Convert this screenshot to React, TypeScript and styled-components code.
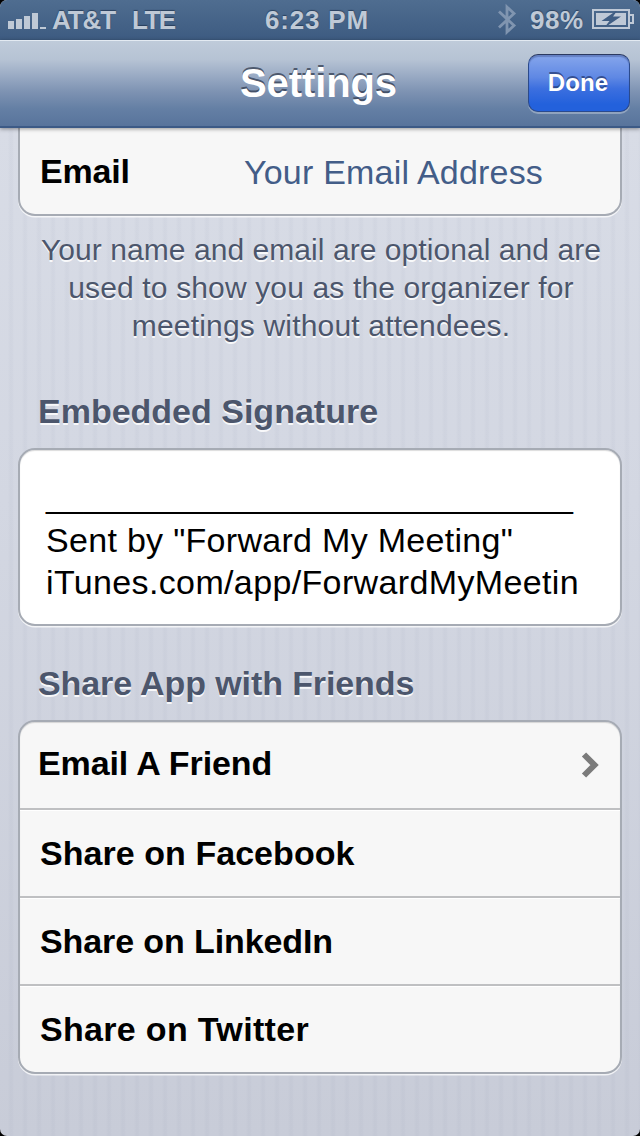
import React from "react";
import styled, { createGlobalStyle } from "styled-components";

const Global = createGlobalStyle`
  *{box-sizing:border-box}
  html,body{margin:0;background:#000}
  body{font-family:"Liberation Sans",Arial,sans-serif;color:#000}
`;

const Screen = styled.div`
  width:640px;height:1136px;overflow:hidden;border-radius:7px;
  display:flex;flex-direction:column;
  background:
    repeating-linear-gradient(90deg,transparent 0 8px,rgba(110,120,150,.045) 10px 12px,transparent 14px),
    linear-gradient(180deg,#d8dce6 128px,#d3d7e2 500px,#c8ccd8 1136px);
`;

const StatusBar = styled.header`
  height:40px;flex:none;display:flex;align-items:flex-start;
  background:linear-gradient(#4f6d90,#3d5b81);
  color:#bfc9d6;font-weight:700;font-size:26px;line-height:40px;
  text-shadow:0 -1px 1px rgba(30,48,76,.7);
  svg{display:block;flex:none}
`;
const StatusText = styled.span<{ $x: number; $w: number; $ls?: number }>`
  margin-left:${p => p.$x}px;width:${p => p.$w}px;white-space:nowrap;
  letter-spacing:${p => p.$ls ?? 0}px;
`;

const NavBar = styled.nav`
  position:relative;z-index:1;height:88px;flex:none;
  display:grid;grid-template-columns:112px 1fr 112px;
  border-top:1px solid #e3eaf2;border-bottom:2px solid #3c5a86;
  background:linear-gradient(#bfcbda 0,#b6c3d4 22%,#98a9c3 42%,#7d92b2 60%,#647fa4 80%,#58749c 100%);
  box-shadow:0 1px 4px rgba(0,0,0,.4);
`;
const Title = styled.h1`
  grid-column:2;margin:0;padding-right:3px;text-align:center;color:#fff;font-size:40px;line-height:84px;
  letter-spacing:-.1px;text-shadow:0 -2px 0 rgba(50,60,80,.75);
`;
const DoneButton = styled.button`
  width:102px;height:58px;margin:13px 0 0 0;padding:0 2px 0 0;border:1.5px solid #2b4a8c;border-top-color:#2c3a60;
  border-radius:10px;color:#fff;font:700 24px/54px "Liberation Sans",Arial,sans-serif;
  letter-spacing:.1px;background:linear-gradient(#86a6ec,#5f88e4 40%,#3c6fdf 60%,#2361dc 88%);
  box-shadow:inset 0 2px 1px rgba(40,60,120,.35),0 2px 0 rgba(255,255,255,.3);
  text-shadow:0 -2px 0 rgba(35,55,110,.7);
`;

const Content = styled.main`
  padding:0 18px;display:flex;flex-direction:column;
`;
const Card = styled.section<{ $joined?: boolean; $white?: boolean }>`
  border:2px solid #a6abb4;overflow:hidden;
  border-radius:${p => (p.$joined ? "0 0 17px 17px" : "17px")};
  ${p => p.$joined && "border-top:0;"}
  background:${p => (p.$white ? "#fff" : "#f7f7f7")};
  box-shadow:0 1.5px 0 rgba(255,255,255,.75)${p => (p.$joined ? "" : ",inset 0 1px 1px rgba(0,0,0,.14)")};
`;
const Field = styled.label`
  height:86px;display:flex;padding-left:20px;font-size:34px;line-height:86px;white-space:nowrap;
`;
const FieldName = styled.strong`width:204px;line-height:86px;letter-spacing:-.2px;`;
const FieldValue = styled.span`color:#435d88;line-height:89px;letter-spacing:.2px;`;

const Note = styled.p`
  margin:15px -10px 0 -8px;text-align:center;color:#4c566c;font-size:30px;line-height:38px;
  letter-spacing:.08px;text-shadow:0 2px 0 rgba(255,255,255,.85);
`;
const NoteLine = styled.span<{ $ls: number }>`
  display:block;letter-spacing:${p => p.$ls}px;
`;
const GroupTitle = styled.h2<{ $top: number; $bottom: number; $ls?: number }>`
  margin:${p => p.$top}px 0 ${p => p.$bottom}px 20px;color:#4c566c;font-size:34px;line-height:40px;
  letter-spacing:${p => p.$ls ?? 0}px;text-shadow:0 2px 0 rgba(255,255,255,.85);white-space:nowrap;
`;
const Signature = styled.div`
  height:174px;padding:30px 0 0 26px;font-size:34px;line-height:42px;white-space:nowrap;
`;
const Underscores = styled.div`height:39px;line-height:30px;letter-spacing:-.09px;`;
const SigLine = styled.div<{ $ls: number }>`letter-spacing:${p => p.$ls}px;`;

const Row = styled.div<{ $first?: boolean; $ls: number }>`
  height:88px;display:flex;justify-content:space-between;font-weight:700;font-size:34px;
  letter-spacing:${p => p.$ls}px;
  padding:0 20px 0 ${p => (p.$first ? 18 : 20)}px;line-height:${p => (p.$first ? 82 : 86)}px;
  ${p => (p.$first ? "height:86px;" : "border-top:2px solid #bfc0c2;box-shadow:inset 0 1px 0 #fff;")}
  svg{margin-top:29px}
`;

const Signal = () => (
  <svg width="40" height="40" fill="#bfc9d6">
    <path d="M1 21h6v8H1zM9 19h6v10H9zM17 16h6v13h-6zM25 13h6v16h-6zM33 27h6v2h-6z" />
  </svg>
);
const Bluetooth = () => (
  <svg width="22" height="40" fill="none" stroke="#8095b0" strokeWidth="2.800">
    <path d="M2 11.500l15 14-7 6.500V7l7 6.500-15 14" />
  </svg>
);
const Battery = () => (
  <svg width="44" height="40">
    <path d="M2 10h36v18H2zM39 15h3v8h-3" fill="none" stroke="#bfc9d6" strokeWidth="2" />
    <path d="M5 13h30v12H5z" fill="#bfc9d6" />
    <path d="M27 9.500L10.500 21h8L13 28l17-11.500h-8z" fill="#405e84" />
    <path d="M2 10h36v18H2z" fill="none" stroke="#bfc9d6" strokeWidth="2" />
  </svg>
);

export default function App() {
  return (
    <>
      <Global />
      <Screen>
        <StatusBar>
          <StatusText $x={7} $w={40}><Signal /></StatusText>
          <StatusText $x={5} $w={80} $ls={-1.1}>AT&amp;T</StatusText>
          <StatusText $x={0} $w={133} $ls={-1.5}>LTE</StatusText>
          <StatusText $x={0} $w={232} $ls={0.8}>6:23 PM</StatusText>
          <Bluetooth />
          <StatusText $x={11} $w={56} $ls={0.5}>98%</StatusText>
          <StatusText $x={5} $w={44}><Battery /></StatusText>
        </StatusBar>
        <NavBar>
          <Title>Settings</Title>
          <DoneButton>Done</DoneButton>
        </NavBar>
        <Content>
          <Card $joined>
            <Field>
              <FieldName>Email</FieldName>
              <FieldValue>Your Email Address</FieldValue>
            </Field>
          </Card>
          <Note>
            <NoteLine $ls={0.06}>Your name and email are optional and are</NoteLine>
            <NoteLine $ls={0.14}>used to show you as the organizer for</NoteLine>
            <NoteLine $ls={0.18}>meetings without attendees.</NoteLine>
          </Note>
          <GroupTitle $top={46} $bottom={17}>Embedded Signature</GroupTitle>
          <Card $white>
            <Signature>
              <Underscores>____________________________</Underscores>
              <SigLine $ls={0.3}>Sent by "Forward My Meeting"</SigLine>
              <SigLine $ls={0.36}>iTunes.com/app/ForwardMyMeetin</SigLine>
            </Signature>
          </Card>
          <GroupTitle $top={37} $bottom={17} $ls={-0.1}>Share App with Friends</GroupTitle>
          <Card>
            <Row $first $ls={-0.1}>
              Email A Friend
              <svg width="19" height="28" fill="none" stroke="#7b7b7b" strokeWidth="6">
                <path d="M3 3.500L13.500 14 3 24.500" />
              </svg>
            </Row>
            <Row $ls={0.05}>Share on Facebook</Row>
            <Row $ls={-0.1}>Share on LinkedIn</Row>
            <Row $ls={0.32}>Share on Twitter</Row>
          </Card>
        </Content>
      </Screen>
    </>
  );
}
